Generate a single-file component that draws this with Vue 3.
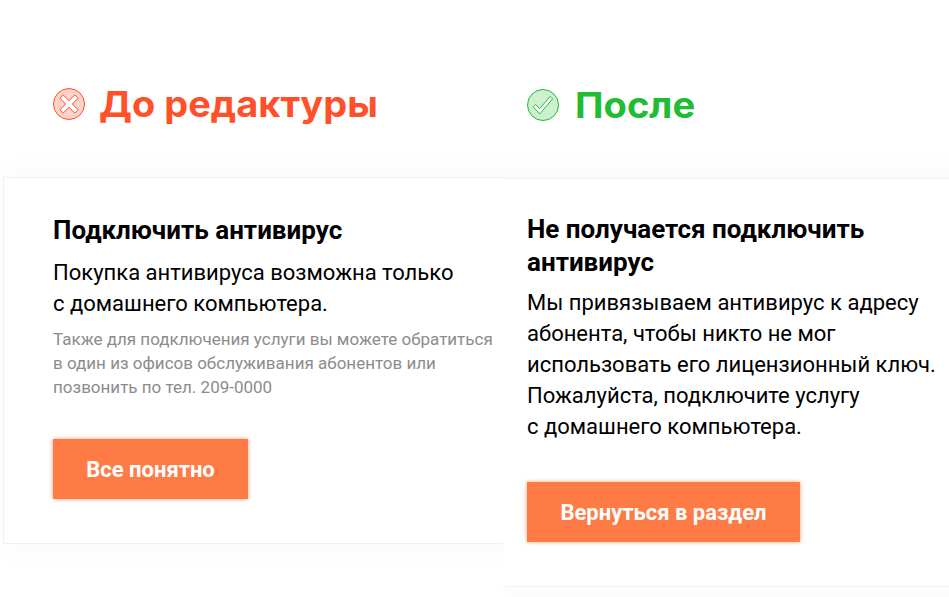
<script setup>
const panels = [
  {
    kind: 'before',
    heading: 'До редактуры',
    title: ['Подключить антивирус'],
    body: ['Покупка антивируса возможна только', 'с домашнего компьютера.'],
    note: [
      'Также для подключения услуги вы можете обратиться',
      'в один из офисов обслуживания абонентов или',
      'позвонить по тел. 209-0000',
    ],
    action: 'Все понятно',
  },
  {
    kind: 'after',
    heading: 'После',
    title: ['Не получается подключить', 'антивирус'],
    body: [
      'Мы привязываем антивирус к адресу',
      'абонента, чтобы никто не мог',
      'использовать его лицензионный ключ.',
      'Пожалуйста, подключите услугу',
      'с домашнего компьютера.',
    ],
    note: [],
    action: 'Вернуться в раздел',
  },
]
</script>

<template>
  <main class="compare">
    <section v-for="p in panels" :key="p.kind" class="panel" :class="p.kind">
      <header class="head">
        <svg class="icon" viewBox="0 0 34 34" width="34" height="34">
          <circle class="disc" cx="17" cy="17" r="15.5" />
          <path
            v-if="p.kind === 'before'"
            class="mark"
            d="M11.2 7.9 L17 13.7 L22.8 7.9 L26.1 11.2 L20.3 17 L26.1 22.8 L22.8 26.1 L17 20.3 L11.2 26.1 L7.9 22.8 L13.7 17 L7.9 11.2 Z"
          />
          <path
            v-else
            class="mark"
            d="M7.2 18.9 L9.6 16.5 L13.7 20.7 L24.2 8.4 L26.6 10.9 L13.8 25.9 Z"
          />
        </svg>
        <h1 class="heading">{{ p.heading }}</h1>
      </header>
      <article class="card">
        <h2 class="title"><span v-for="l in p.title" :key="l" class="line">{{ l }}</span></h2>
        <p class="body"><span v-for="l in p.body" :key="l" class="line">{{ l }}</span></p>
        <p v-if="p.note.length" class="note"><span v-for="l in p.note" :key="l" class="line">{{ l }}</span></p>
        <button class="action" type="button">{{ p.action }}</button>
      </article>
    </section>
  </main>
</template>

<style>
body {
  background: #fff;
  overflow: hidden;
}
</style>

<style scoped>
.compare {
  display: grid;
  grid-template-columns: 503px 446px;
  height: 597px;
  background: #fff;
  font-family: Roboto, "Liberation Sans", sans-serif;
  color: #000;
}
.panel {
  overflow: hidden;
  box-sizing: border-box;
}
.head {
  display: flex;
  align-items: center;
  height: 34px;
}
.before .head {
  padding: 87px 0 56px 52px;
}
.after .head {
  padding: 88px 0 56px 23px;
}
.icon {
  flex: none;
  overflow: visible;
}
.disc {
  stroke-width: 1;
}
.mark {
  fill: #fff;
  stroke-width: 1;
}
.before .disc {
  fill: #ffd3c9;
  stroke: #ff5029;
}
.before .mark {
  stroke: #ff5029;
}
.after .disc {
  fill: #cdf0d0;
  stroke: #20bc31;
}
.after .mark {
  stroke: #20bc31;
}
.heading {
  margin: 0 0 0 15px;
  font: 700 36px/44px Inter, sans-serif;
  white-space: nowrap;
  transform-origin: left center;
}
.before .heading {
  margin-left: 13px;
  color: #ff5029;
  transform: scaleX(1.055);
}
.after .heading {
  color: #20bc31;
  transform: scaleX(1.06);
}
.card {
  box-sizing: border-box;
  background: #fff;
  border: 1px solid #f1f1f1;
  box-shadow: 0 0 40px rgba(0, 0, 0, 0.03);
}
.before .card {
  width: 540px;
  height: 367px;
  margin-left: 3px;
  padding: 36px 0 0 49px;
}
.after .card {
  width: 520px;
  height: 409px;
  margin-left: -20px;
  padding: 34px 0 0 43px;
}
.line {
  display: block;
  width: max-content;
}
.title {
  margin: 0;
  font-size: 26px;
  line-height: 33px;
  font-weight: 700;
}
.body {
  margin: 10px 0 0;
  font-size: 22px;
  line-height: 31px;
}
.after .body {
  margin-top: 8px;
}
.note {
  margin: 8px 0 0;
  font-size: 17px;
  line-height: 24px;
  color: #8c8c8c;
}
.action {
  display: block;
  box-sizing: border-box;
  height: 60px;
  padding: 2px 0 0;
  border: 0;
  background: #ff7b45;
  box-shadow: 0 0 4px rgba(255, 100, 40, 0.65);
  color: #fff;
  font: 700 22px/58px Roboto, sans-serif;
}
.before .action {
  width: 195px;
  margin-top: 40px;
}
.after .action {
  width: 273px;
  margin-top: 40px;
}
</style>
